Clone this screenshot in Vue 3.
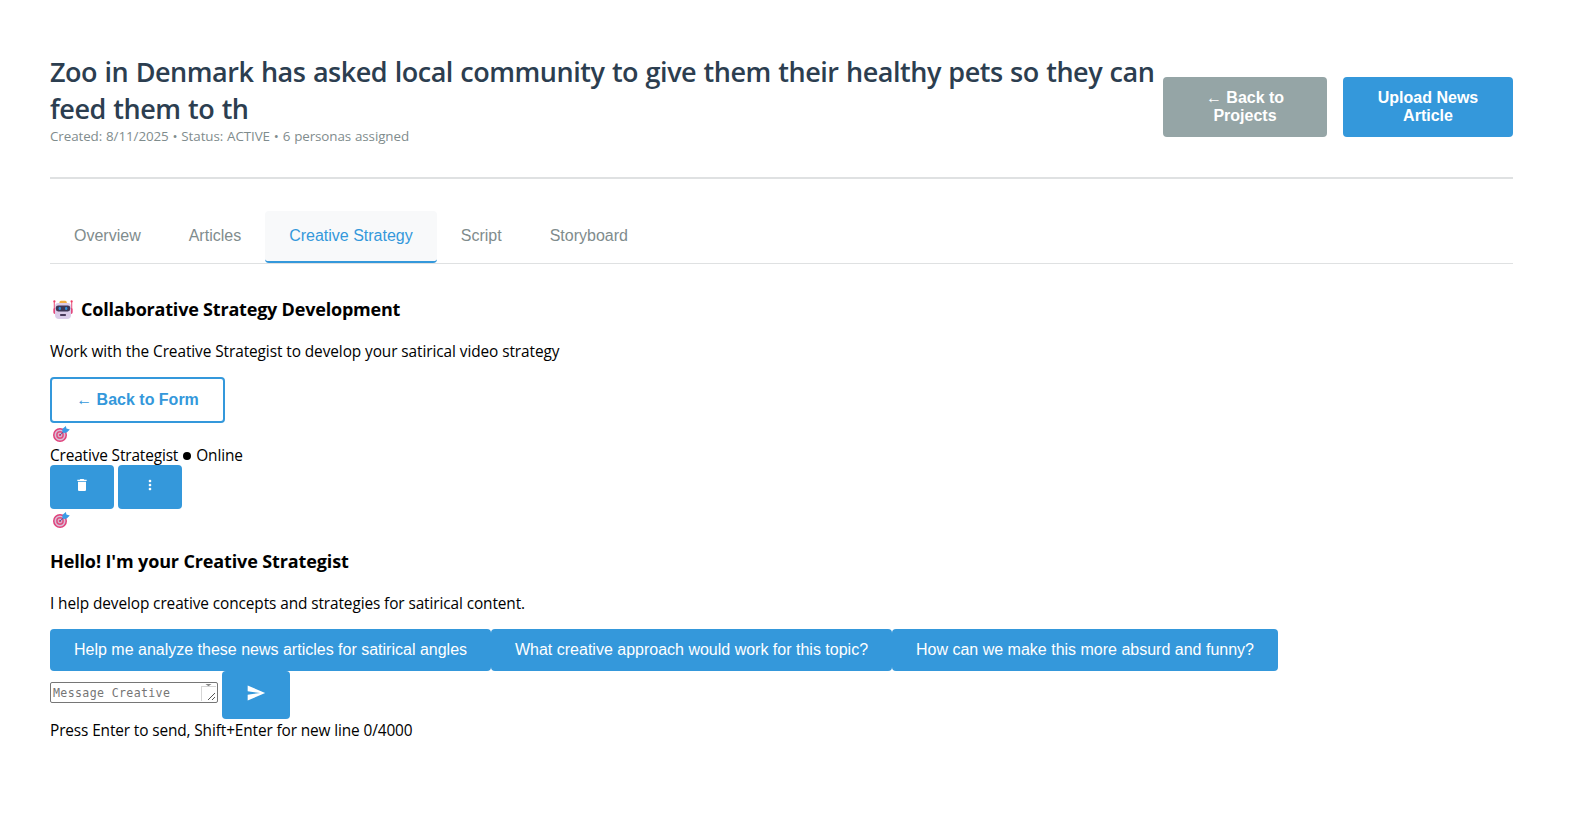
<script setup>
import { h } from 'vue'

const tabs = ['Overview', 'Articles', 'Creative Strategy', 'Script', 'Storyboard']
const active = 'Creative Strategy'
const prompts = [
  { id: 'angles', text: 'Help me analyze these news articles for satirical angles' },
  { id: 'approach', text: 'What creative approach would work for this topic?' },
  { id: 'absurd', text: 'How can we make this more absurd and funny?' }
]

const TargetIcon = () =>
  h('svg', { width: 17, height: 16, viewBox: '0 0 17 16' }, [
    h('circle', { cx: 7, cy: 9, r: 7, fill: '#e0407a' }),
    h('circle', { cx: 7, cy: 9, r: 5.5, fill: '#d9bfd8' }),
    h('circle', { cx: 7, cy: 9, r: 3.9, fill: '#df4f80' }),
    h('circle', { cx: 7, cy: 9, r: 2.4, fill: '#d9b3cf' }),
    h('circle', { cx: 7, cy: 9, r: 1.1, fill: '#d8386c' }),
    h('path', { d: 'M7 9L12 4.5', stroke: '#4a5a9c', 'stroke-width': 0.9 }),
    h('path', { d: 'M9.2 5.4L9.6 2.8 12.9 0 13.4 2.6 16.8 3.6 13.8 6.6 10.6 7Z', fill: '#3a9be6' })
  ])
</script>

<template>
  <main class="page">
    <header class="header">
      <div class="info">
        <h1>Zoo in Denmark has asked local community to give them their healthy pets so they can<br>feed them to th</h1>
        <div class="meta">Created: 8/11/2025 • Status: ACTIVE • 6 personas assigned</div>
      </div>
      <div class="actions">
        <button class="btn back"><span><span class="arrow">←</span> Back to<br>Projects</span></button>
        <button class="btn upload">Upload News<br>Article</button>
      </div>
    </header>

    <nav class="tabs">
      <button v-for="t in tabs" :key="t" class="tab" :class="{ active: t === active }">{{ t }}</button>
    </nav>

    <h3 class="title">
      <svg class="robot" width="20" height="20" viewBox="0 0 20 20">
        <path d="M1.3 1V12M18.7 1V12" stroke="#e95a82" stroke-width="1.1" />
        <circle cx="1.4" cy="1.4" r="1.1" fill="#ee3d68" /><circle cx="18.6" cy="1.4" r="1.1" fill="#ee3d68" />
        <rect x="0.4" y="8" width="3" height="6" rx="1.4" fill="#e2487c" />
        <rect x="16.6" y="8" width="3" height="6" rx="1.4" fill="#e2487c" />
        <rect x="6.4" y="0.8" width="7.4" height="4" rx="1.6" fill="#f3ae42" />
        <path d="M5 3H15Q18 3 18 7V15Q18 19 14 19H6Q2 19 2 15V7Q2 3 5 3Z" fill="#dacbe8" />
        <rect x="2.8" y="5.4" width="14.4" height="6" rx="2.4" fill="#3d3654" />
        <ellipse cx="6.8" cy="8.4" rx="1.2" ry="1.6" fill="#2f8fd8" /><ellipse cx="13.2" cy="8.4" rx="1.2" ry="1.6" fill="#2f8fd8" />
        <rect x="7" y="14" width="6" height="2" rx="0.8" fill="#493a5b" />
      </svg>
      <span>Collaborative Strategy Development</span>
    </h3>
    <p class="lead">Work with the Creative Strategist to develop your satirical video strategy</p>

    <button class="btn outline"><span><span class="arrow">←</span> Back to Form</span></button>
    <div class="avatar"><TargetIcon /></div>
    <div class="status"><span class="name">Creative Strategist</span><i class="dot"></i><span>Online</span></div>
    <div class="tools">
      <button class="btn tool" aria-label="Clear">
        <svg width="16" height="16" viewBox="0 0 24 24"><path fill="#fff" d="M6 19c0 1.1.9 2 2 2h8c1.1 0 2-.9 2-2V7H6v12zM19 4h-3.5l-1-1h-5l-1 1H5v2h14V4z" /></svg>
      </button>
      <button class="btn tool" aria-label="More">
        <svg width="16" height="16" viewBox="0 0 24 24"><path fill="#fff" d="M12 8c1.1 0 2-.9 2-2s-.9-2-2-2-2 .9-2 2 .9 2 2 2zm0 2c-1.1 0-2 .9-2 2s.9 2 2 2 2-.9 2-2-.9-2-2-2zm0 6c-1.1 0-2 .9-2 2s.9 2 2 2 2-.9 2-2-.9-2-2-2z" /></svg>
      </button>
    </div>
    <div class="avatar second"><TargetIcon /></div>

    <h3 class="hello">Hello! I'm your Creative Strategist</h3>
    <p class="help">I help develop creative concepts and strategies for satirical content.</p>

    <div class="prompts">
      <button v-for="p in prompts" :key="p.id" class="btn prompt" :class="p.id">{{ p.text }}</button>
    </div>
    <div class="composer">
      <div class="field">
        <span>Message Creative</span>
        <svg width="15" height="17" viewBox="0 0 15 17">
          <path d="M4.5 0H10.5L7.5 2.2Z" fill="#858585" />
          <path d="M0.5 2V17M0 2.5H15" stroke="#d5d5d5" fill="none" />
          <path d="M7 16L14 9M11 16L14 13" stroke="#555" stroke-width="1" />
        </svg>
      </div>
      <button class="btn send" aria-label="Send">
        <svg width="20" height="20" viewBox="0 0 24 24"><path fill="#fff" d="M2.01 21L23 12 2.01 3 2 10l15 2-15 2z" /></svg>
      </button>
    </div>
    <div class="hint">Press Enter to send, Shift+Enter for new line 0/4000</div>
  </main>
</template>

<style>
body { margin: 0; background: #fff; }
</style>

<style scoped>
.page {
  box-sizing: border-box;
  width: 1569px;
  height: 829px;
  padding: 53px 56px 0 50px;
  overflow: hidden;
  font: 15.4px/21px "Open Sans", "Noto Sans", sans-serif;
  letter-spacing: -0.1px;
  color: #000;
}
h1, h3, p { margin: 0; }
svg { display: block; flex: none; }
.header {
  display: flex;
  justify-content: space-between;
  height: 124px;
  border-bottom: 2px solid #dfe1e2;
}
.info { white-space: nowrap; }
h1 {
  font-size: 27px;
  line-height: 37px;
  font-weight: 600;
  letter-spacing: -0.47px;
  word-spacing: 0.9px;
  color: #2c3e50;
}
.meta {
  font-size: 13.4px;
  line-height: 19px;
  letter-spacing: -0.09px;
  word-spacing: 0.5px;
  color: #7f8c8d;
}
.actions { display: flex; gap: 16px; padding-top: 24px; }
.btn {
  box-sizing: border-box;
  display: flex;
  align-items: center;
  justify-content: center;
  padding: 0;
  border: none;
  border-radius: 4px;
  background: #3498db;
  color: #fff;
  font: 16px/18px "Liberation Sans", Arial, sans-serif;
  white-space: nowrap;
}
.arrow { font-family: "Liberation Serif", serif; font-weight: 400; line-height: 1; }
.back, .upload { height: 60px; font-weight: 700; }
.back { width: 164px; background: #95a5a6; }
.upload { width: 170px; }
.tabs {
  display: flex;
  height: 52px;
  margin-top: 32px;
  border-bottom: 1px solid #dfe1e2;
}
.tab {
  height: 52px;
  padding: 0 24px;
  border: none;
  border-bottom: 2px solid transparent;
  border-radius: 4px 4px 0 0;
  background: none;
  color: #7f8c8d;
  font: 16px/18px "Liberation Sans", Arial, sans-serif;
}
.tab.active {
  border-radius: 4px;
  border-bottom-color: #3498db;
  background: #f8f9fa;
  color: #3498db;
}
h3 { font-size: 18px; line-height: 25px; font-weight: 700; }
.title {
  display: flex;
  align-items: center;
  gap: 8px;
  margin-top: 33px;
  padding-left: 3px;
  letter-spacing: -0.2px;
}
.lead { margin-top: 19px; letter-spacing: -0.08px; }
.outline {
  width: 175px;
  height: 46px;
  margin-top: 15px;
  border: 2px solid #3498db;
  background: #fff;
  color: #3498db;
  font-weight: 700;
}
.avatar { height: 16px; margin: 3px 0 0 3px; }
.status { display: flex; align-items: center; margin-top: 3px; height: 20px; }
.name { letter-spacing: -0.14px; }
.dot { width: 8px; height: 8px; margin: 2px 5px 0 5px; border-radius: 50%; background: #000; }
.tools { display: flex; gap: 4px; }
.tool { width: 64px; height: 44px; padding-bottom: 4px; }
.avatar.second { margin-top: 3px; }
.hello { margin-top: 21px; letter-spacing: -0.13px; }
.help { margin-top: 19px; }
.prompts { display: flex; margin-top: 15px; }
.prompt { height: 42px; }
.angles { width: 441px; }
.approach { width: 401px; }
.absurd { width: 386px; }
.composer { display: flex; gap: 4px; }
.field {
  box-sizing: border-box;
  display: flex;
  justify-content: space-between;
  width: 168px;
  height: 21px;
  margin-top: 11px;
  padding: 1px 1px 1px 2px;
  border: 1px solid #767676;
  border-radius: 2px;
  color: #757575;
  font: 11.6px/18px "DejaVu Sans Mono", monospace;
  letter-spacing: 0.35px;
  white-space: nowrap;
}
.send { width: 68px; height: 48px; padding-bottom: 4px; }
.hint { margin-top: 1px; letter-spacing: -0.12px; }
</style>
